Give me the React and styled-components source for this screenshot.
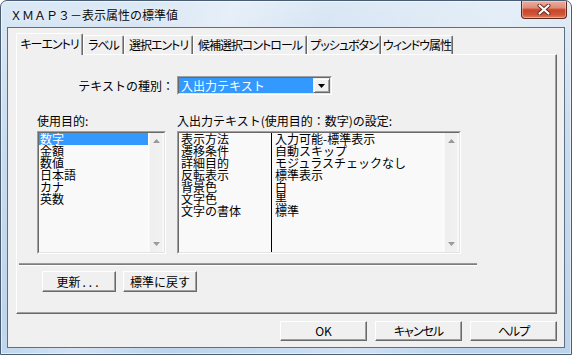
import React from 'react';
import styled, { createGlobalStyle } from 'styled-components';

const FONT = `"Noto Sans CJK JP", "Noto Sans", sans-serif`;

const Global = createGlobalStyle`
  html, body { margin: 0; padding: 0; background: #ffffff; }
  body { width: 572px; height: 355px; overflow: hidden; font-family: ${FONT}; font-size: 12px; color: #000; }
  * { box-sizing: border-box; }
`;

const Window = styled.div`
  width: 572px;
  height: 355px;
  display: flex;
  flex-direction: column;
  border: 1px solid #485d72;
  border-radius: 7px 7px 0 0;
  overflow: hidden;
  background:
    linear-gradient(115deg, rgba(255,255,255,0) 20%, rgba(255,255,255,0.35) 32%, rgba(255,255,255,0) 45%, rgba(255,255,255,0.3) 70%, rgba(255,255,255,0) 85%),
    linear-gradient(to bottom, #dbe8f5 0%, #cadcef 40%, #bcd3eb 100%);
  box-shadow: inset 0 0 0 1px rgba(255,255,255,0.55);
`;

const TitleBar = styled.div`
  height: 26px;
  flex: none;
  display: flex;
  align-items: flex-start;
  justify-content: space-between;
  padding: 0 4px 0 9px;
`;

const Title = styled.div`
  margin-top: 6px;
  font-size: 12px;
  line-height: 16px;
  color: #0a0a0a;
  text-shadow: 0 0 5px rgba(255,255,255,0.95);
  white-space: nowrap;
`;

const CloseButton = styled.div`
  width: 46px;
  height: 18px;
  display: flex;
  align-items: center;
  justify-content: center;
  border: 1px solid #5f2820;
  border-top: none;
  border-radius: 0 0 4px 4px;
  background: linear-gradient(to bottom, #eab0a2 0%, #df8b77 40%, #c8452c 52%, #cf5637 80%, #e0805e 100%);
  box-shadow: inset 0 0 0 1px rgba(255,255,255,0.35);
`;

const Client = styled.div`
  flex: 1;
  margin: 0 6px 6px;
  border: 1px solid #5c6f83;
  background: #f0f0f0;
  display: flex;
  flex-direction: column;
  padding: 5px 7px 0 8px;
`;

const TabStrip = styled.div`
  height: 21px;
  flex: none;
  display: flex;
  align-items: flex-end;
  position: relative;
  z-index: 1;
`;

const Tab = styled.div`
  width: ${p => p.$w}px;
  height: ${p => (p.$active ? 22 : 19)}px;
  margin-bottom: ${p => (p.$active ? -1 : 0)}px;
  padding-bottom: ${p => (p.$active ? 1 : 0)}px;
  flex: none;
  display: flex;
  align-items: center;
  justify-content: center;
  background: #f0f0f0;
  border-top: 1px solid #ffffff;
  border-left: 1px solid #ffffff;
  border-right: 1px solid #696969;
  box-shadow: inset -1px 0 #a0a0a0;
  border-radius: 2px 2px 0 0;
  font-size: 12px;
  line-height: 14px;
  letter-spacing: -1px;
  font-feature-settings: "palt";
  white-space: nowrap;
`;

const Panel = styled.div`
  width: 541px;
  height: 260px;
  flex: none;
  display: flex;
  flex-direction: column;
  padding: 21px 0 0 2px;
  border-top: 1px solid #ffffff;
  border-left: 1px solid #ffffff;
  border-right: 1px solid #696969;
  border-bottom: 1px solid #696969;
  box-shadow: inset -1px -1px #a0a0a0;
`;

const ComboRow = styled.div`
  display: flex;
  align-items: center;
  gap: 3px;
  margin-left: 18px;
  height: 19px;
`;

const FieldLabel = styled.div`
  width: ${p => p.$w}px;
  text-align: ${p => p.$align || 'left'};
  font-size: 12px;
  line-height: 14px;
  white-space: nowrap;
`;

const Sunken = styled.div`
  width: ${p => p.$w}px;
  height: ${p => p.$h}px;
  flex: none;
  border: 1px solid;
  border-color: #a0a0a0 #ffffff #ffffff #a0a0a0;
`;

const SunkenInner = styled.div`
  height: 100%;
  border: 1px solid;
  border-color: #696969 #e3e3e3 #e3e3e3 #696969;
  background: ${p => p.$bg || '#f9f9f9'};
  display: flex;
  overflow: hidden;
`;

const Selection = styled.div`
  flex: 1;
  background: #3399ff;
  color: #ffffff;
  padding-left: 2px;
  font-size: 12px;
  line-height: 15px;
  white-space: nowrap;
`;

const DropButton = styled.div`
  width: 17px;
  flex: none;
  display: flex;
  align-items: center;
  justify-content: center;
  background: #f0f0f0;
  border-top: 1px solid #f0f0f0;
  border-left: 1px solid #f0f0f0;
  border-right: 1px solid #696969;
  border-bottom: 1px solid #696969;
  box-shadow: inset 1px 1px #ffffff, inset -1px -1px #a0a0a0;
`;

const ListsGrid = styled.div`
  display: grid;
  grid-template-columns: 129px 284px;
  column-gap: 11px;
  margin: 19px 0 0 18px;
`;

const ListColumn = styled.div`
  display: flex;
  flex-direction: column;
  gap: 3px;
`;

const Items = styled.div`
  flex: 1;
  display: flex;
  flex-direction: column;
`;

const Item = styled.div`
  height: 12px;
  line-height: 12px;
  font-size: 12px;
  padding-left: 1px;
  white-space: nowrap;
  background: ${p => (p.$selected ? '#3399ff' : 'transparent')};
  color: ${p => (p.$selected ? '#ffffff' : '#000000')};
`;

const Column = styled.div`
  width: ${p => (p.$w ? `${p.$w}px` : 'auto')};
  flex: ${p => (p.$w ? 'none' : 1)};
  padding-left: ${p => p.$pad}px;
  border-right: ${p => (p.$divider ? '1px solid #000000' : 'none')};
  display: flex;
  flex-direction: column;
`;

const ScrollBar = styled.div`
  width: 16px;
  flex: none;
  display: flex;
  flex-direction: column;
  justify-content: space-between;
  background: linear-gradient(to right, #fdfdfd 0, #fdfdfd 1px, #efefef 2px, #f1f1f1 14px, #fafafa 15px);
`;

const ScrollArrow = styled.div`
  height: 16px;
  display: flex;
  align-items: center;
  justify-content: center;
`;

const Separator = styled.div`
  width: 458px;
  height: 2px;
  margin-top: 9px;
  border-top: 1px solid #9a9a9a;
  border-bottom: 1px solid #7d7d7d;
  box-shadow: 0 1px 0 #ffffff;
`;

const PanelButtons = styled.div`
  display: flex;
  gap: 7px;
  margin: 6px 0 0 23px;
`;

const Button = styled.div`
  width: ${p => p.$w}px;
  height: ${p => p.$h}px;
  flex: none;
  display: flex;
  align-items: center;
  justify-content: center;
  background: #f0f0f0;
  border-top: 1px solid #ffffff;
  border-left: 1px solid #ffffff;
  border-right: 1px solid #696969;
  border-bottom: 1px solid #696969;
  box-shadow: inset -1px -1px #a0a0a0;
  font-size: 12px;
  line-height: 14px;
  letter-spacing: ${p => (p.$palt ? '-1px' : 'normal')};
  font-feature-settings: ${p => (p.$palt ? '"palt"' : 'normal')};
  white-space: nowrap;
`;

const Dots = styled.span`
  letter-spacing: 3px;
  margin-left: 2px;
`;

const DialogButtons = styled.div`
  display: flex;
  justify-content: flex-end;
  gap: 8px;
  margin-top: 7px;
`;

const Arrow = ({ down, color = '#9a9a9a' }) => (
  <svg width="7" height="4" viewBox="0 0 7 4">
    <polygon points={down ? '0,0 7,0 3.5,4' : '0,4 7,4 3.5,0'} fill={color} />
  </svg>
);

const Scroll = () => (
  <ScrollBar>
    <ScrollArrow><Arrow /></ScrollArrow>
    <ScrollArrow><Arrow down /></ScrollArrow>
  </ScrollBar>
);

const tabs = [
  ['キーエントリ', 67, true],
  ['ラベル', 41],
  ['選択エントリ', 69],
  ['候補選択コントロール', 114],
  ['プッシュボタン', 74],
  ['ウィンドウ属性', 72],
];

const purposes = ['数字', '金額', '数値', '日本語', 'カナ', '英数'];
const settingNames = ['表示方法', '遷移条件', '詳細目的', '反転表示', '背景色', '文字色', '文字の書体'];
const settingValues = ['入力可能-標準表示', '自動スキップ', 'モジュラスチェックなし', '標準表示', '白', '黒', '標準'];

export default function App() {
  return (
    <>
      <Global />
      <Window>
        <TitleBar>
          <Title>ＸＭＡＰ３－表示属性の標準値</Title>
          <CloseButton>
            <svg width="14" height="11" viewBox="0 0 14 11">
              <path d="M2.5 1.5 L11.5 9.5 M11.5 1.5 L2.5 9.5" stroke="#6a2418" strokeWidth="4" strokeLinecap="round" />
              <path d="M2.5 1.5 L11.5 9.5 M11.5 1.5 L2.5 9.5" stroke="#ffffff" strokeWidth="2.2" strokeLinecap="round" />
            </svg>
          </CloseButton>
        </TitleBar>
        <Client>
          <TabStrip>
            {tabs.map(([label, w, active]) => (
              <Tab key={label} $w={w} $active={active}>{label}</Tab>
            ))}
          </TabStrip>
          <Panel>
            <ComboRow>
              <FieldLabel $w={137} $align="right">テキストの種別：</FieldLabel>
              <Sunken $w={155} $h={19}>
                <SunkenInner $bg="#ffffff">
                  <Selection>入出力テキスト</Selection>
                  <DropButton><Arrow down color="#000000" /></DropButton>
                </SunkenInner>
              </Sunken>
            </ComboRow>
            <ListsGrid>
              <ListColumn>
                <FieldLabel>使用目的:</FieldLabel>
                <Sunken $w={129} $h={123}>
                  <SunkenInner>
                    <Items>
                      {purposes.map((p, i) => (
                        <Item key={p} $selected={i === 0}>{p}</Item>
                      ))}
                    </Items>
                    <Scroll />
                  </SunkenInner>
                </Sunken>
              </ListColumn>
              <ListColumn>
                <FieldLabel>入出力テキスト(使用目的：数字)の設定:</FieldLabel>
                <Sunken $w={284} $h={123}>
                  <SunkenInner>
                    <Column $w={93} $pad={1} $divider>
                      {settingNames.map(n => <Item key={n}>{n}</Item>)}
                    </Column>
                    <Column $pad={2}>
                      {settingValues.map(v => <Item key={v}>{v}</Item>)}
                    </Column>
                    <Scroll />
                  </SunkenInner>
                </Sunken>
              </ListColumn>
            </ListsGrid>
            <Separator />
            <PanelButtons>
              <Button $w={74} $h={21}>更新<Dots>...</Dots></Button>
              <Button $w={74} $h={21}>標準に戻す</Button>
            </PanelButtons>
          </Panel>
          <DialogButtons>
            <Button $w={87} $h={20}>OK</Button>
            <Button $w={87} $h={20} $palt>キャンセル</Button>
            <Button $w={87} $h={20} $palt>ヘルプ</Button>
          </DialogButtons>
        </Client>
      </Window>
    </>
  );
}
